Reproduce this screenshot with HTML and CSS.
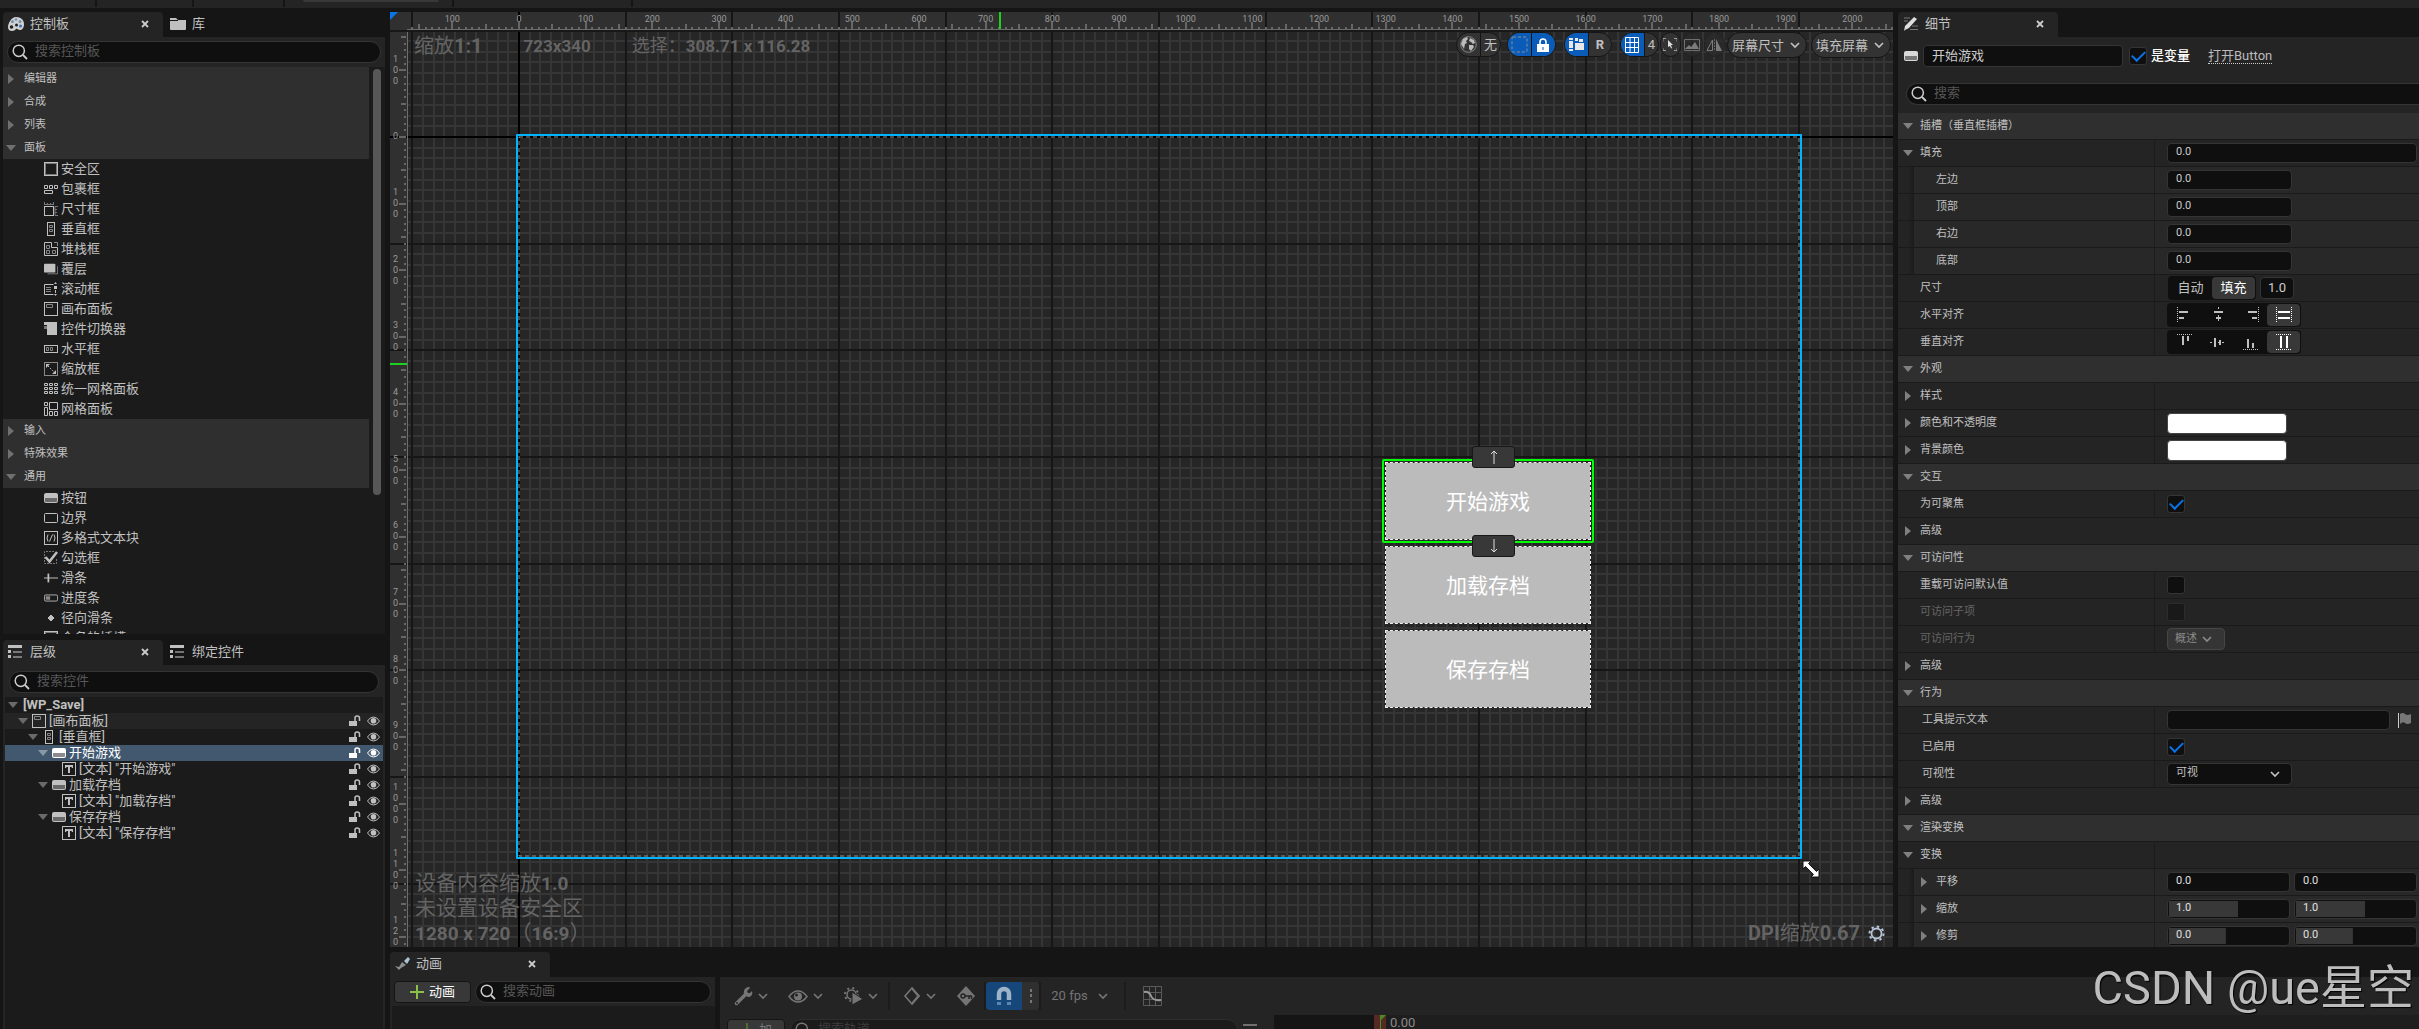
FILE: index.html
```html
<!DOCTYPE html>
<html lang="zh-CN">
<head>
<meta charset="utf-8">
<title>WP_Save</title>
<link rel="stylesheet" href="styles.css">
</head>
<body>
<svg class="defs" aria-hidden="true">
  <symbol id="right" viewBox="0 0 10 10"><path d="M2 0l6 5-6 5z" fill="currentColor"/></symbol>
  <symbol id="down" viewBox="0 0 10 10"><path d="M0 2h10l-5 6z" fill="currentColor"/></symbol>
  <symbol id="x" viewBox="0 0 8 8"><path d="M1 1l6 6M7 1l-6 6" stroke="currentColor" stroke-width="1.8"/></symbol>
  <symbol id="chev" viewBox="0 0 10 8"><path d="M1 2l4 4 4-4" fill="none" stroke="currentColor" stroke-width="1.7"/></symbol>
  <symbol id="search" viewBox="0 0 16 16"><circle cx="6.8" cy="6.8" r="5.6" fill="none" stroke="currentColor" stroke-width="1.5"/><path d="M11 11l4 4" stroke="currentColor" stroke-width="1.8"/></symbol>
  <symbol id="palette" viewBox="0 0 16 14"><path d="M8 0C13 0 16 3 16 7s-2 6-4 6-3-2-4-1-2 2-4 2-4-1-4-4S3 0 8 0z" fill="#d0d0d0"/><circle cx="3.5" cy="10" r="1.8" fill="#222"/><g fill="#6d93b5"><circle cx="4.500" cy="4.500" r="1.500"/><circle cx="8" cy="2.500" r="1.300"/><circle cx="12" cy="4.500" r="1.500"/></g><circle cx="8.500" cy="8" r="1.500" fill="#222"/><circle cx="12.500" cy="9" r="1.600" fill="#3d78c8"/></symbol>
  <symbol id="folder" viewBox="0 0 16 12"><path d="M0 0h6l2 2h8v9q0 1-1 1H1q-1 0-1-1z" fill="currentColor"/><path d="M0 2.500h8" stroke="#151515"/></symbol>
  <symbol id="list" viewBox="0 0 14 13"><path d="M0 0h14v3H0zM0 5h3v3H0zM0 10h3v3H0z" fill="currentColor"/><path d="M5 6h9v2H5zM5 11h9v2H5z" fill="currentColor" opacity=".55"/></symbol>
  <symbol id="pencil" viewBox="0 0 15 14"><path d="M1 1h6M1 4h4M9 9h6M7 12.500h8" stroke="#777" stroke-width="1"/><path d="M11 0l3 2-8 9-4 2-1 1 1-5z" fill="#ddd"/></symbol>
  <symbol id="i-safe" viewBox="0 0 14 14"><rect x=".5" y=".5" width="13" height="13" fill="none" stroke="currentColor"/><rect x="1.500" y="1.500" width="11" height="11" fill="none" stroke="#777"/></symbol>
  <symbol id="i-wrap" viewBox="0 0 14 14"><path d="M.5 3.500h3v3h-3zM5.500 3.500h3v3h-3zM10.500 3.500h3v3h-3zM.5 8.500h8v3h-8z" fill="none" stroke="currentColor"/></symbol>
  <symbol id="i-size" viewBox="0 0 14 14"><rect x=".5" y="4.500" width="9" height="9" fill="none" stroke="currentColor"/><path d="M0 2.500h10M.5 0v2M3.500 1v1M6.500 1v1M9.500 0v2M14 4.500h-3v9h3M11 7.500h2M11 10.500h2" fill="none" stroke="#777"/></symbol>
  <symbol id="i-vbox" viewBox="0 0 14 14"><rect x="3.500" y=".5" width="7" height="13" fill="none" stroke="currentColor"/><path d="M5.500 3.500h3v2h-3zM5.500 7.500h3v2h-3z" fill="none" stroke="#888"/></symbol>
  <symbol id="i-stack" viewBox="0 0 14 14"><path d="M.5 .5h7v5h6v8H.5z" fill="none" stroke="currentColor"/><path d="M2.500 3.500h3v3h-3zM2.500 8.500h3v3h-3zM8.500 8.500h3v3h-3zM10 .5h3.500V4" fill="none" stroke="#888"/></symbol>
  <symbol id="i-over" viewBox="0 0 16 14"><path d="M15.500 4v8.500H4" fill="none" stroke="#888"/><rect width="13" height="10" rx="1" y="1" fill="currentColor"/></symbol>
  <symbol id="i-scroll" viewBox="0 0 14 14"><path d="M9.500 2.500h-9v10h9" fill="none" stroke="currentColor"/><path d="M2 5.500h5M2 7.500h5M2 9.500h5" stroke="#888"/><path d="M10 4h3v3h-3zM10 2l1.500-2L13 2zM10 12l1.500 2 1.500-2zM11 8h1v3h-1z" fill="currentColor"/></symbol>
  <symbol id="i-canvas" viewBox="0 0 14 14"><rect x=".5" y=".5" width="13" height="13" fill="none" stroke="currentColor"/><path d="M2.500 2.500h6v3h-6z" fill="none" stroke="#888"/></symbol>
  <symbol id="i-switch" viewBox="0 0 14 14"><path d="M0 0h13v13H3V3H0z" fill="currentColor"/><path d="M0 4h3v3H0z" fill="#777"/></symbol>
  <symbol id="i-hbox" viewBox="0 0 14 14"><rect x=".5" y="3.500" width="13" height="7" fill="none" stroke="currentColor"/><path d="M2.500 5.500h2v3h-2zM6.500 5.500h2v3h-2z" fill="none" stroke="#888"/></symbol>
  <symbol id="i-scale" viewBox="0 0 14 14"><rect x=".5" y=".5" width="13" height="13" fill="none" stroke="#888"/><path d="M2 2h4L2 6zM12 12H8l4-4z" fill="currentColor"/><path d="M4 4l6 6" stroke="currentColor" stroke-dasharray="1.500"/></symbol>
  <symbol id="i-ugrid" viewBox="0 0 14 14"><path d="M.5 1.500h3v2h-3zM5.500 1.500h3v2h-3zM10.500 1.500h3v2h-3zM.5 5.500h3v2h-3zM5.500 5.500h3v2h-3zM10.500 5.500h3v2h-3zM.5 9.500h3v2h-3zM5.500 9.500h3v2h-3zM10.500 9.500h3v2h-3z" fill="none" stroke="currentColor"/></symbol>
  <symbol id="i-grid" viewBox="0 0 14 14"><path d="M.5 .5h3v3h-3zM5.500 .5h8v7h-8zM.5 5.500h3v8h-3zM5.500 9.500h3v4h-3zM10.500 9.500h3v4h-3z" fill="none" stroke="currentColor"/></symbol>
  <symbol id="i-btn" viewBox="0 0 14 14"><rect y="2" width="14" height="10" rx="2" fill="currentColor"/><path d="M1 7h12v3q0 1-1 1H2q-1 0-1-1z" fill="#000" opacity=".45"/></symbol>
  <symbol id="i-border" viewBox="0 0 14 14"><rect x=".5" y="2.500" width="13" height="9" rx="1" fill="none" stroke="currentColor"/></symbol>
  <symbol id="i-rich" viewBox="0 0 14 14"><rect x=".5" y=".5" width="13" height="13" fill="none" stroke="currentColor"/><path d="M4 3.500Q2 7 4 10.500M10 3.500q2 3.500 0 7M8.500 3.500l-3 7" fill="none" stroke="currentColor"/></symbol>
  <symbol id="i-check" viewBox="0 0 14 14"><path d="M10 .5H.5v12h12V7" fill="none" stroke="#777" stroke-dasharray="2 1"/><path d="M1.500 6l4 4.500L13 1" fill="none" stroke="currentColor" stroke-width="2.500"/></symbol>
  <symbol id="i-slider" viewBox="0 0 16 14"><path d="M0 6h16v2H0z" fill="#777"/><path d="M4 2h2v10H4z" fill="currentColor"/></symbol>
  <symbol id="i-prog" viewBox="0 0 16 14"><rect x=".5" y="3.500" width="15" height="7" rx="1.500" fill="none" stroke="currentColor"/><path d="M2 5h5v4H2z" fill="#888"/></symbol>
  <symbol id="i-radial" viewBox="0 0 14 14"><path d="M7 4l3 3-3 3-3-3z" fill="currentColor" stroke="currentColor"/></symbol>
  <symbol id="i-text" viewBox="0 0 14 14"><rect x=".5" y=".5" width="13" height="13" fill="none" stroke="currentColor"/><path d="M3 3h8v3h-1l-.5-1H8v6H6V5H4.500L4 6H3z" fill="currentColor"/></symbol>
  <symbol id="lock" viewBox="0 0 13 12"><path d="M1 6h8v5H1z" fill="currentColor"/><path d="M7 6V3q0-2 2.200-2T11.500 3v3" fill="none" stroke="currentColor" stroke-width="1.500"/></symbol>
  <symbol id="eye" viewBox="0 0 13 10"><path d="M.5 5Q3 1 6.500 1T12.500 5Q10 9 6.500 9T.5 5z" fill="none" stroke="currentColor"/><circle cx="6.500" cy="4.800" r="2.800" fill="currentColor"/></symbol>
  <symbol id="al-l" viewBox="0 0 16 16"><path d="M.5 0v16" stroke="currentColor" stroke-dasharray="1"/><path d="M2 4h9v2H2zM2 10h5v2H2z" fill="currentColor"/></symbol>
  <symbol id="al-c" viewBox="0 0 16 16"><path d="M8.500 0v16" stroke="currentColor" stroke-dasharray="2"/><path d="M4 4h9v2H4zM6 10h5v2H6z" fill="currentColor"/></symbol>
  <symbol id="al-r" viewBox="0 0 16 16"><path d="M15.500 0v16" stroke="currentColor" stroke-dasharray="1"/><path d="M5 4h9v2H5zM9 10h5v2H9z" fill="currentColor"/></symbol>
  <symbol id="al-f" viewBox="0 0 16 16"><path d="M.5 0v16M15.500 0v16" stroke="currentColor" stroke-dasharray="1"/><path d="M2 4h12v2H2zM2 10h12v2H2z" fill="currentColor"/></symbol>
</svg>

<div class="app">
  <div class="topbar"><i class="t1"></i><i class="t2"></i><i class="t3"></i><i class="t4"></i><i class="t5"></i><i class="t6"></i></div>
  <div class="work">
    <aside class="left">
      <section class="dock palette">
        <nav class="tabs">
          <div class="tab on"><svg width="16" height="14"><use href="#palette"/></svg><span>控制板</span><button class="close" aria-label="关闭"><svg width="8" height="8"><use href="#x"/></svg></button></div>
          <div class="tab"><svg width="16" height="12"><use href="#folder"/></svg><span>库</span></div>
        </nav>
        <label class="search"><svg width="16" height="16"><use href="#search"/></svg><input placeholder="搜索控制板" aria-label="搜索控制板"></label>
        <div class="listwrap">
          <div class="list">
            <div class="cat"><svg><use href="#right"/></svg>编辑器</div>
            <div class="cat"><svg><use href="#right"/></svg>合成</div>
            <div class="cat"><svg><use href="#right"/></svg>列表</div>
            <div class="cat"><svg><use href="#down"/></svg>面板</div>
            <ul>
              <li><svg><use href="#i-safe"/></svg>安全区</li>
              <li><svg><use href="#i-wrap"/></svg>包裹框</li>
              <li><svg><use href="#i-size"/></svg>尺寸框</li>
              <li><svg><use href="#i-vbox"/></svg>垂直框</li>
              <li><svg><use href="#i-stack"/></svg>堆栈框</li>
              <li><svg><use href="#i-over"/></svg>覆层</li>
              <li><svg><use href="#i-scroll"/></svg>滚动框</li>
              <li><svg><use href="#i-canvas"/></svg>画布面板</li>
              <li><svg><use href="#i-switch"/></svg>控件切换器</li>
              <li><svg><use href="#i-hbox"/></svg>水平框</li>
              <li><svg><use href="#i-scale"/></svg>缩放框</li>
              <li><svg><use href="#i-ugrid"/></svg>统一网格面板</li>
              <li><svg><use href="#i-grid"/></svg>网格面板</li>
            </ul>
            <div class="cat"><svg><use href="#right"/></svg>输入</div>
            <div class="cat"><svg><use href="#right"/></svg>特殊效果</div>
            <div class="cat"><svg><use href="#down"/></svg>通用</div>
            <ul>
              <li><svg><use href="#i-btn"/></svg>按钮</li>
              <li><svg><use href="#i-border"/></svg>边界</li>
              <li><svg><use href="#i-rich"/></svg>多格式文本块</li>
              <li><svg><use href="#i-check"/></svg>勾选框</li>
              <li><svg><use href="#i-slider"/></svg>滑条</li>
              <li><svg><use href="#i-prog"/></svg>进度条</li>
              <li><svg><use href="#i-radial"/></svg>径向滑条</li>
              <li><svg><use href="#i-safe"/></svg>命名的插槽</li>
            </ul>
          </div>
          <div class="scroll"><i></i></div>
        </div>
      </section>
      <section class="dock hier">
        <nav class="tabs">
          <div class="tab on"><svg width="14" height="13"><use href="#list"/></svg><span>层级</span><button class="close" aria-label="关闭"><svg width="8" height="8"><use href="#x"/></svg></button></div>
          <div class="tab"><svg width="14" height="13"><use href="#list"/></svg><span>绑定控件</span></div>
        </nav>
        <label class="search"><svg width="16" height="16"><use href="#search"/></svg><input placeholder="搜索控件" aria-label="搜索控件"></label>
        <div class="tree">
          <div class="node d0"><svg class="ar"><use href="#down"/></svg><b>[WP_Save]</b></div>
          <div class="node d1 hov"><svg class="ar"><use href="#down"/></svg><svg class="ic"><use href="#i-canvas"/></svg><span>[画布面板]</span><svg class="lk"><use href="#lock"/></svg><svg class="ey"><use href="#eye"/></svg></div>
          <div class="node d2"><svg class="ar"><use href="#down"/></svg><svg class="ic"><use href="#i-vbox"/></svg><span>[垂直框]</span><svg class="lk"><use href="#lock"/></svg><svg class="ey"><use href="#eye"/></svg></div>
          <div class="node d3 sel"><svg class="ar"><use href="#down"/></svg><svg class="ic"><use href="#i-btn"/></svg><span>开始游戏</span><svg class="lk"><use href="#lock"/></svg><svg class="ey"><use href="#eye"/></svg></div>
          <div class="node d4"><svg class="ar"></svg><svg class="ic"><use href="#i-text"/></svg><span>[文本] "开始游戏"</span><svg class="lk"><use href="#lock"/></svg><svg class="ey"><use href="#eye"/></svg></div>
          <div class="node d3"><svg class="ar"><use href="#down"/></svg><svg class="ic"><use href="#i-btn"/></svg><span>加载存档</span><svg class="lk"><use href="#lock"/></svg><svg class="ey"><use href="#eye"/></svg></div>
          <div class="node d4"><svg class="ar"></svg><svg class="ic"><use href="#i-text"/></svg><span>[文本] "加载存档"</span><svg class="lk"><use href="#lock"/></svg><svg class="ey"><use href="#eye"/></svg></div>
          <div class="node d3"><svg class="ar"><use href="#down"/></svg><svg class="ic"><use href="#i-btn"/></svg><span>保存存档</span><svg class="lk"><use href="#lock"/></svg><svg class="ey"><use href="#eye"/></svg></div>
          <div class="node d4"><svg class="ar"></svg><svg class="ic"><use href="#i-text"/></svg><span>[文本] "保存存档"</span><svg class="lk"><use href="#lock"/></svg><svg class="ey"><use href="#eye"/></svg></div>
        </div>
      </section>
    </aside>

    <main class="view">
      <svg class="grid" width="100%" height="100%" aria-hidden="true">
        <defs>
          <pattern id="minor" x="128" y="124" width="320" height="320" patternUnits="userSpaceOnUse">
            <path d="M12 0v320M22 0v320M33 0v320M44 0v320M54 0v320M65 0v320M76 0v320M86 0v320M97 0v320M118 0v320M129 0v320M140 0v320M150 0v320M161 0v320M172 0v320M182 0v320M193 0v320M204 0v320M225 0v320M236 0v320M246 0v320M257 0v320M268 0v320M278 0v320M289 0v320M300 0v320M310 0v320M0 12h320M0 22h320M0 33h320M0 44h320M0 54h320M0 65h320M0 76h320M0 86h320M0 97h320M0 118h320M0 129h320M0 140h320M0 150h320M0 161h320M0 172h320M0 182h320M0 193h320M0 204h320M0 225h320M0 236h320M0 246h320M0 257h320M0 268h320M0 278h320M0 289h320M0 300h320M0 310h320" stroke="#353535" stroke-width="2"/>
          </pattern>
          <pattern id="mv" x="128" y="0" width="320" height="320" patternUnits="userSpaceOnUse"><path d="M1 0v320M108 0v320M214 0v320" stroke="#161616" stroke-width="2"/></pattern>
          <pattern id="mh" x="0" y="124" width="320" height="320" patternUnits="userSpaceOnUse"><path d="M0 1h320M0 108h320M0 214h320" stroke="#161616" stroke-width="2"/></pattern>
          <pattern id="tx" x="128" y="0" width="200" height="18" patternUnits="userSpaceOnUse"><path d="M8 15v2M14 15v2M21 15v2M28 15v2M34 12v5M41 15v2M48 15v2M54 15v2M61 15v2M74 15v2M81 15v2M88 15v2M94 15v2M101 12v5M108 15v2M114 15v2M121 15v2M128 15v2M141 15v2M148 15v2M154 15v2M161 15v2M168 12v5M174 15v2M181 15v2M188 15v2M194 15v2M1 10v7M68 10v7M134 10v7" stroke="#666" stroke-width="2"/></pattern>
          <pattern id="ty" x="0" y="124" width="18" height="200" patternUnits="userSpaceOnUse"><path d="M14 8h2M14 14h2M14 21h2M14 28h2M11 34h5M14 41h2M14 48h2M14 54h2M14 61h2M14 74h2M14 81h2M14 88h2M14 94h2M11 101h5M14 108h2M14 114h2M14 121h2M14 128h2M14 141h2M14 148h2M14 154h2M14 161h2M11 168h5M14 174h2M14 181h2M14 188h2M14 194h2M9 1h7M9 68h7M9 134h7" stroke="#666" stroke-width="2"/></pattern>
        </defs>
        <rect width="100%" height="100%" fill="#262626"/>
        <rect width="100%" height="100%" fill="url(#minor)"/>
        <rect width="100%" height="18" fill="#303030"/>
        <rect width="18" height="100%" fill="#303030"/>
        <rect x="18" width="100%" height="100%" fill="url(#mv)"/>
        <rect y="18" width="100%" height="100%" fill="url(#mh)"/>
        <path d="M129 0v2000M0 125h4000" stroke="#000" stroke-width="2"/>
        <rect x="18" width="100%" height="18" fill="url(#tx)"/>
        <rect y="20" width="18" height="100%" fill="url(#ty)"/>
        <path d="M0 19h4000" stroke="#181818" stroke-width="2"/>
        <path d="M17 17.500h4000M17.500 20v2000" stroke="#6c6c6c"/>
        <path d="M0 0h8l-8 8z" fill="#0a74e8"/>
        <path d="M610 0v17M0 352h17" stroke="#1fd11f" stroke-width="2"/>
      </svg>
      <div class="rx"><span>100</span><span>0</span><span>100</span><span>200</span><span>300</span><span>400</span><span>500</span><span>600</span><span>700</span><span>800</span><span>900</span><span>1000</span><span>1100</span><span>1200</span><span>1300</span><span>1400</span><span>1500</span><span>1600</span><span>1700</span><span>1800</span><span>1900</span><span>2000</span><span></span><span></span></div>
      <div class="ry"><span>100</span><span>0</span><span>100</span><span>200</span><span>300</span><span>400</span><span>500</span><span>600</span><span>700</span><span>800</span><span>900</span><span>1000</span><span>1100</span><span>1200</span><span></span><span></span><span></span><span></span><span></span><span></span><span></span><span></span><span></span><span></span></div>

      <div class="info"><span class="big">缩放<b>1:1</b></span><b>723x340</b><span>选择：<b>308.71 x 116.28</b></span></div>

      <div class="vbar">
        <div class="pill world"><button><svg width="17" height="17" viewBox="0 0 17 17"><circle cx="8.500" cy="8.500" r="7.800" fill="#333" stroke="#888"/><path d="M3 3l4-2 1 2-2 2 1 2-2 1-1 5-3-5zM10 2l4 2 1 3-2 1-2-2-2-1zM9 9l4 0 1 2-3 4-2-2z" fill="#bbb"/></svg></button><button class="n20">无</button></div>
        <div class="pill"><button class="blue"><svg width="17" height="17" viewBox="0 0 17 17"><rect x="1" y="1" width="15" height="15" rx="1" fill="none" stroke="#8a8f95" stroke-dasharray="3 2"/></svg></button><button class="blue"><svg width="12" height="14" viewBox="0 0 12 14"><path d="M0 6h12v8H0z" fill="#fff"/><path d="M3 6V4a3 3 0 016 0v2" fill="none" stroke="#fff" stroke-width="1.600"/><path d="M5.500 9h1v3h-1z" fill="#0b5cb8"/></svg></button></div>
        <div class="pill"><button class="blue"><svg width="15" height="13" viewBox="0 0 15 13"><path d="M0 0h4v2H0zM0 3h4v7H0zM0 11h4v2H0zM6 0h3v3H6zM10 1h4v3h-4zM6 5h9v7H6z" fill="#e8e8e8"/></svg></button><button><b>R</b></button></div>
        <div class="set">
          <div class="pill"><button class="blue"><svg width="14" height="16" viewBox="0 0 14 16"><path d="M.5 .5h13v15H.5zM5 0v16M9.500 0v16M0 5.500h14M0 10.500h14" fill="none" stroke="#fff"/></svg></button><button class="n14">4</button></div>
          <div class="pill"><button class="n21"><svg width="14" height="13" viewBox="0 0 14 13"><path d="M0 3.500V.5h3M11 .5h3v3M14 10v2.500h-3M3 12.500H0V10" fill="none" stroke="#999"/><path d="M5 2l5 5H8l1 3-1 .5L7 8 5 9z" fill="#ddd"/></svg></button></div>
          <div class="pill dim"><button class="n21"><svg width="16" height="12" viewBox="0 0 16 12"><path d="M.5 .5h15v11H.5z" fill="none" stroke="#888"/><path d="M1 10l4-4 2 2 4-5 4 7z" fill="#999"/></svg></button></div>
          <div class="pill dim"><button class="n21"><svg width="17" height="12" viewBox="0 0 17 12"><path d="M6.500 1v10.500H1z" fill="none" stroke="#999"/><path d="M10 0v12h6z" fill="#999"/><path d="M8.500 0v12" stroke="#777" stroke-dasharray="2 1"/></svg></button></div>
        </div>
        <div class="set drop"><button class="dd">屏幕尺寸<svg width="10" height="8"><use href="#chev"/></svg></button><button class="dd">填充屏幕<svg width="10" height="8"><use href="#chev"/></svg></button></div>
      </div>

      <div class="root"><svg width="100%" height="100%"><rect class="dash" x="1" y="1"/></svg></div>
      <div class="vb">
        <button class="gb">开始游戏</button><button class="gb">加载存档</button><button class="gb">保存存档</button>
        <div class="selbox"></div>
        <button class="mv up" aria-label="上移"><svg width="8" height="14" viewBox="0 0 8 14"><path d="M4 1v13M1 4l3-3 3 3" fill="none" stroke="#ddd"/></svg></button>
        <button class="mv dn" aria-label="下移"><svg width="8" height="14" viewBox="0 0 8 14"><path d="M4 0v13M1 10l3 3 3-3" fill="none" stroke="#ddd"/></svg></button>
      </div>
      <svg class="resize" width="18" height="18" viewBox="0 0 18 18"><path d="M1 1h8L6.500 3.500l8 8L17 9v8H9l2.500-2.500-8-8L1 9z" fill="#fff" stroke="#111"/></svg>

      <div class="status"><span>设备内容缩放<b>1.0</b></span><span>未设置设备安全区</span><span><b>1280 x 720</b>（<b>16:9</b>）</span></div>
      <div class="dpi"><span><b>DPI</b>缩放<b>0.67</b></span><svg width="17" height="17" viewBox="0 0 17 17"><circle cx="8.500" cy="8.500" r="5" fill="none" stroke="#b9c6d8" stroke-width="1.800"/><circle cx="8.500" cy="8.500" r="7" fill="none" stroke="#b9c6d8" stroke-width="2" stroke-dasharray="2.500 3"/></svg></div>
    </main>

    <aside class="dock details">
      <nav class="tabs"><div class="tab on"><svg width="15" height="14"><use href="#pencil"/></svg><span>细节</span><button class="close" aria-label="关闭"><svg width="8" height="8"><use href="#x"/></svg></button></div></nav>
      <div class="name"><svg width="14" height="14"><use href="#i-btn"/></svg><input class="in" value="开始游戏" aria-label="名称"><label><input type="checkbox" checked>是变量</label><a href="#">打开Button</a></div>
      <label class="search"><svg width="16" height="16"><use href="#search"/></svg><input placeholder="搜索" aria-label="搜索"></label>
      <div class="rows">
        <div class="hd"><svg class="ar"><use href="#down"/></svg>插槽（垂直框插槽）</div>
        <div class="row"><span class="lb"><svg class="ar"><use href="#down"/></svg>填充</span><span class="v"><input class="in wide" value="0.0" aria-label="填充"></span></div>
        <div class="row sub"><label class="lb" for="pl">左边</label><span class="v"><input class="in" id="pl" value="0.0"></span></div>
        <div class="row sub"><label class="lb" for="pt">顶部</label><span class="v"><input class="in" id="pt" value="0.0"></span></div>
        <div class="row sub"><label class="lb" for="pr">右边</label><span class="v"><input class="in" id="pr" value="0.0"></span></div>
        <div class="row sub"><label class="lb" for="pb">底部</label><span class="v"><input class="in" id="pb" value="0.0"></span></div>
        <div class="row"><span class="lb">尺寸</span><span class="v"><span class="seg txt"><button>自动</button><button class="on">填充</button></span><input class="in mini" value="1.0" aria-label="尺寸"></span></div>
        <div class="row"><span class="lb">水平对齐</span><span class="v"><span class="seg"><button aria-label="左"><svg><use href="#al-l"/></svg></button><button aria-label="中"><svg><use href="#al-c"/></svg></button><button aria-label="右"><svg><use href="#al-r"/></svg></button><button class="on" aria-label="填充"><svg><use href="#al-f"/></svg></button></span></span></div>
        <div class="row"><span class="lb">垂直对齐</span><span class="v"><span class="seg rot"><button aria-label="上"><svg viewBox="0 0 16 16"><path d="M0 .5h16" stroke="currentColor" stroke-dasharray="1"/><path d="M5 2h2v9H5zM10 2h2v5h-2z" fill="currentColor"/></svg></button><button aria-label="中"><svg viewBox="0 0 16 16"><path d="M0 8.500h16" stroke="currentColor" stroke-dasharray="2"/><path d="M4 4h2v9H4zM9 6h2v5H9z" fill="currentColor"/></svg></button><button aria-label="下"><svg viewBox="0 0 16 16"><path d="M0 15.500h16" stroke="currentColor" stroke-dasharray="1"/><path d="M4 5h2v9H4zM9 9h2v5H9z" fill="currentColor"/></svg></button><button class="on" aria-label="填充"><svg viewBox="0 0 16 16"><path d="M0 .5h16M0 15.500h16" stroke="currentColor" stroke-dasharray="1"/><path d="M4 2h2v12H4zM10 2h2v12h-2z" fill="currentColor"/></svg></button></span></span></div>
        <div class="hd"><svg class="ar"><use href="#down"/></svg>外观</div>
        <div class="row"><span class="lb"><svg class="ar"><use href="#right"/></svg>样式</span><span class="v"></span></div>
        <div class="row"><span class="lb"><svg class="ar"><use href="#right"/></svg>颜色和不透明度</span><span class="v"><button class="swatch" aria-label="颜色和不透明度"></button></span></div>
        <div class="row"><span class="lb"><svg class="ar"><use href="#right"/></svg>背景颜色</span><span class="v"><button class="swatch" aria-label="背景颜色"></button></span></div>
        <div class="hd"><svg class="ar"><use href="#down"/></svg>交互</div>
        <div class="row"><label class="lb" for="foc">为可聚焦</label><span class="v"><input type="checkbox" id="foc" checked></span></div>
        <div class="row full"><span class="lb"><svg class="ar"><use href="#right"/></svg>高级</span></div>
        <div class="hd"><svg class="ar"><use href="#down"/></svg>可访问性</div>
        <div class="row"><label class="lb" for="acc">重载可访问默认值</label><span class="v"><input type="checkbox" id="acc"></span></div>
        <div class="row off"><label class="lb" for="ach">可访问子项</label><span class="v"><input type="checkbox" id="ach" disabled></span></div>
        <div class="row off"><span class="lb">可访问行为</span><span class="v"><button class="sum" disabled>概述<svg width="10" height="8"><use href="#chev"/></svg></button></span></div>
        <div class="row full"><span class="lb"><svg class="ar"><use href="#right"/></svg>高级</span></div>
        <div class="hd"><svg class="ar"><use href="#down"/></svg>行为</div>
        <div class="row in2"><label class="lb" for="tip">工具提示文本</label><span class="v"><input class="in tip" id="tip"><svg class="flag" width="13" height="15" viewBox="0 0 13 15"><path d="M.5 0v15" stroke="#ccc"/><path d="M2 1q3-2 5 0t6 0v9q-4 2-6 0t-5 1z" fill="#777"/></svg></span></div>
        <div class="row in2"><label class="lb" for="ena">已启用</label><span class="v"><input type="checkbox" id="ena" checked></span></div>
        <div class="row in2"><label class="lb" for="vis">可视性</label><span class="v"><span class="selw"><select id="vis"><option>可视</option></select><svg width="10" height="8"><use href="#chev"/></svg></span></span></div>
        <div class="row full"><span class="lb"><svg class="ar"><use href="#right"/></svg>高级</span></div>
        <div class="hd"><svg class="ar"><use href="#down"/></svg>渲染变换</div>
        <div class="row"><span class="lb"><svg class="ar"><use href="#down"/></svg>变换</span><span class="v"></span></div>
        <div class="row sub br"><span class="lb"><svg class="ar"><use href="#right"/></svg>平移</span><span class="v two"><input class="in" value="0.0" aria-label="平移 X"><input class="in" value="0.0" aria-label="平移 Y"></span></div>
        <div class="row sub br"><span class="lb"><svg class="ar"><use href="#right"/></svg>缩放</span><span class="v two"><input class="in f57" value="1.0" aria-label="缩放 X"><input class="in f57" value="1.0" aria-label="缩放 Y"></span></div>
        <div class="row sub br"><span class="lb"><svg class="ar"><use href="#right"/></svg>修剪</span><span class="v two"><input class="in f47" value="0.0" aria-label="修剪 X"><input class="in f47" value="0.0" aria-label="修剪 Y"></span></div>
      </div>
    </aside>

    <section class="dock anim">
      <nav class="tabs"><div class="tab on"><svg width="15" height="13" viewBox="0 0 15 13"><path d="M9 4l4-4 2 2-3 5z" fill="#a9c4d6"/><path d="M7 5l4 3-5 3-2 2-4-4 4 1z" fill="#8a8f8f"/></svg><span>动画</span><button class="close" aria-label="关闭"><svg width="8" height="8"><use href="#x"/></svg></button></div></nav>
      <div class="abody">
        <div class="alist">
          <div class="atools"><button class="add"><svg width="14" height="14" viewBox="0 0 14 14"><path d="M7 0v14M0 7h14" stroke="#8bc34a" stroke-width="2"/></svg>动画</button><label class="search"><svg width="16" height="16"><use href="#search"/></svg><input placeholder="搜索动画" aria-label="搜索动画"></label></div>
          <div class="dark"></div>
        </div>
        <div class="seq">
          <div class="tools">
            <button class="w48"><svg width="19" height="19" viewBox="0 0 19 19"><path d="M2.500 16.500l9-9" stroke="currentColor" stroke-width="3.500" stroke-linecap="round"/><path d="M16 1l-3 3 1 2 2 0 2-2q1 3-1 5t-5 0l-2-2q-1-4 2-6t4 0z" fill="currentColor"/><circle cx="3" cy="16" r="1" fill="#242424"/></svg><svg width="10" height="8"><use href="#chev"/></svg></button>
            <button class="w48"><svg width="20" height="13" viewBox="0 0 20 13"><path d="M1 6.500Q5 1 10 1t9 5.500Q15 12 10 12T1 6.500z" fill="none" stroke="currentColor" stroke-width="1.500"/><circle cx="10" cy="6.500" r="4" fill="currentColor"/><circle cx="8.500" cy="5" r="1.500" fill="#242424"/></svg><svg width="10" height="8"><use href="#chev"/></svg></button>
            <button class="w48"><svg width="19" height="18" viewBox="0 0 19 18"><circle cx="7.500" cy="7.500" r="4.500" fill="none" stroke="currentColor" stroke-width="1.500"/><circle cx="7.500" cy="7.500" r="6.500" fill="none" stroke="currentColor" stroke-width="2" stroke-dasharray="2 3.100"/><path d="M8 5l11 7-11 6z" fill="currentColor" stroke="#242424"/></svg><svg width="10" height="8"><use href="#chev"/></svg></button>
            <i></i>
            <button class="w50"><svg width="18" height="20" viewBox="0 0 18 20"><path d="M9 2l7 8-7 8-7-8z" fill="none" stroke="currentColor" stroke-width="1.600"/><path d="M9 1l8 9-8 9v-3l5-6-5-6z" fill="currentColor"/></svg><svg width="10" height="8"><use href="#chev"/></svg></button>
            <button class="w30"><svg width="18" height="20" viewBox="0 0 18 20"><path d="M9 0l9 10-9 10L0 10z" fill="currentColor"/><circle cx="6" cy="10" r="2" fill="none" stroke="#242424" stroke-width="1.500"/><path d="M8 10h7M12 10v3M14.500 10v3" stroke="#242424" stroke-width="1.500"/></svg></button>
            <i></i>
            <span class="snap"><button class="mag"><svg width="16" height="20" viewBox="0 0 16 20"><path d="M3 14V8a5 5 0 0110 0v6" fill="none" stroke="#9fb3c8" stroke-width="4.500"/><path d="M1 16h4v3H1zM11 16h4v3h-4z" fill="#5c86b0"/></svg></button><button class="dots"><svg width="4" height="14" viewBox="0 0 4 14"><path d="M1 0h2v3H1zM1 5h2v3H1zM1 11h2v3H1z" fill="currentColor"/></svg></button></span>
            <i></i>
            <button class="fps">20 fps<svg width="10" height="8"><use href="#chev"/></svg></button>
            <i></i>
            <button class="curve"><svg width="19" height="20" viewBox="0 0 19 20"><path d="M.5 .5h18v19H.5zM6.500 0v20M12.500 0v20M0 6.500h19M0 13.500h19" fill="none" stroke="#5a5a5a"/><path d="M1 6q5-1 7 4t10 4" fill="none" stroke="#999" stroke-width="2"/></svg></button>
          </div>
          <div class="tracks">
            <div class="tl"><button class="add"><svg width="14" height="14" viewBox="0 0 14 14"><path d="M7 0v14M0 7h14" stroke="#4f6d33" stroke-width="2"/></svg>加</button><label class="search"><svg width="16" height="16"><use href="#search"/></svg><input placeholder="搜索轨道" aria-label="搜索轨道"></label><i></i></div>
            <div class="head"></div>
            <div class="time"><svg width="13" height="14" viewBox="0 0 13 14"><path d="M0 0h12v14H0z" fill="#552a24"/><path d="M6 0h6L7 5v9H6z" fill="#4c8a22"/></svg>0.00</div>
          </div>
        </div>
      </div>
    </section>
  </div>
</div>
<div class="mark">CSDN @ue星空</div>
</body>
</html>
```

FILE: styles.css
```css
* { box-sizing: border-box; }
body { margin: 0; background: #151515; color: #c0c0c0; font: 13px/16px Roboto, "Noto Sans CJK SC", sans-serif; overflow: hidden; }
button, input, select { font: inherit; color: inherit; border: 0; padding: 0; margin: 0; background: none; }
ul { list-style: none; margin: 0; padding: 0; }
svg { display: block; flex: none; }
.defs { display: none; }

.app { height: 100vh; display: flex; flex-direction: column; gap: 4px; }
.topbar { height: 8px; flex: none; background: #242424; display: flex; padding-left: 95px; }
.topbar i { height: 7px; border-left: 2px solid #151515; }
.topbar .t1 { width: 97px; }
.topbar .t2 { width: 91px; }
.topbar .t3 { width: 20px; }
.topbar .t4 { width: 136px; height: 2px; background: #383838; border: 0; border-radius: 0 0 3px 3px; }
.topbar .t5 { width: 179px; margin-left: 13px; }
.topbar .t6 { width: 10px; }
.work { flex: 1; min-height: 0; display: grid; grid-template: minmax(0, 1fr) 77px / 382px minmax(0, 1fr) 521px; gap: 5px; padding-left: 3px; }
.left { grid-row: 1 / 3; display: flex; flex-direction: column; gap: 6px; min-height: 0; }
.dock { background: #242424; display: flex; flex-direction: column; min-height: 0; overflow: hidden; }
.palette { flex: 622 1 0; }
.hier { flex: 389 1 0; }

.tabs { height: 25px; flex: none; background: #151515; display: flex; }
.tab { display: flex; align-items: center; gap: 6px; padding: 0 7px 2px; line-height: 22px; }
.tab.on { width: 160px; background: #242424; border-radius: 4px 4px 0 0; padding: 0 14px 2px 5px; }
.close { margin-left: auto; }
.close svg { color: #ccc; }
.hier .tab { gap: 8px; }
.search { display: flex; align-items: center; gap: 7px; height: 22px; flex: none; margin: 4px; padding: 0 4px; background: #0f0f0f; border: 1px solid #343434; border-radius: 11px; }
.search input { flex: 1; min-width: 0; outline: 0; padding-bottom: 2px; }
.search input::placeholder { color: #575757; opacity: 1; }
.search svg { color: #ccc; }

.listwrap { flex: 1; min-height: 0; display: flex; background: #1b1b1b; }
.list { flex: 1; overflow: hidden; }
.cat { height: 23px; display: flex; align-items: center; gap: 8px; padding-left: 3px; background: #2f2f2f; font-size: 11px; }
.cat svg { width: 10px; height: 10px; color: #707070; }
.list li { height: 20px; display: flex; align-items: center; gap: 3px; padding: 0 0 1px 41px; }
.list li svg { width: 14px; height: 14px; }
.scroll { width: 16px; padding: 2px 4px; }
.scroll i { display: block; height: 426px; border-radius: 4px; background: #575757; }

.hier .search { margin: 6px 6px 4px; }
.tree { flex: 1; margin: 0 2px; background: #1b1b1b; }
.node { height: 16px; display: flex; align-items: center; gap: 3px; padding-right: 3px; }
.node .ar { width: 10px; height: 10px; color: #6a6a6a; }
.node b { font-weight: 700; margin-left: 2px; }
.node .ic { width: 14px; height: 14px; margin-left: 1px; }
.node .lk { width: 13px; height: 12px; margin-left: auto; }
.node .ey { width: 13px; height: 10px; margin-left: 3px; }
.d0 { padding-left: 3px; }
.d1 { padding-left: 13px; }
.d2 { padding-left: 23px; }
.d3 { padding-left: 33px; }
.d4 { padding-left: 43px; }
.hov { background: #242424; }
.sel { background: #41586f; color: #fff; }
.sel .ar { color: #8a98a5; }

.view { position: relative; overflow: hidden; background: #262626; color: #646464; }
.grid { position: absolute; inset: 0; }
.rx { position: absolute; left: 29px; top: 2px; width: 1600px; display: grid; grid-template-columns: repeat(24, 1fr); text-align: center; font-size: 9px; line-height: 11px; color: #999; }
.ry { position: absolute; left: 3px; top: 25px; height: 1600px; width: 5px; display: grid; grid-template-rows: repeat(24, 1fr); align-items: center; font-size: 9px; line-height: 11px; color: #999; word-break: break-all; }
.view b { font-weight: 700; }
.info { position: absolute; left: 24px; top: 22px; display: flex; gap: 41px; align-items: center; font-size: 18px; line-height: 24px; }
.info .big { font-size: 20px; }
.info > b, .info > span:last-child b { font-size: 17px; }
.status { position: absolute; left: 25px; bottom: 1px; display: flex; flex-direction: column; font-size: 21px; line-height: 25px; }
.status b { font-size: 19px; }
.dpi { position: absolute; right: 8px; bottom: 2px; display: flex; gap: 8px; align-items: center; font-size: 20px; line-height: 24px; }

.vbar { position: absolute; right: 2px; top: 20px; display: flex; gap: 8px; color: #c0c0c0; }
.set { display: flex; gap: 1px; }
.set.drop { gap: 4px; margin-left: -6px; }
.pill { display: flex; height: 25px; border-radius: 13px; border: 1px solid #151515; background: #333; overflow: hidden; }
.pill.world { margin-right: -2px; }
.pill button { width: 23px; display: flex; align-items: center; justify-content: center; line-height: 22px; }
.pill button + button { border-left: 1px solid #151515; }
.pill .n20 { width: 20px; }
.pill .n14 { width: 14px; }
.pill .n21 { width: 19px; }
.pill .blue { background: #0b5cb8; }
.pill .blue + .blue { width: 24px; }
.pill.dim { background: #2b2b2b; border-color: #202020; opacity: .75; }
.dd { height: 26px; border-radius: 13px; border: 1px solid #151515; background: #333; display: flex; align-items: center; gap: 6px; padding: 0 6px 0 4px; line-height: 23px; }

.root { position: absolute; left: 126px; top: 122px; width: 1286px; height: 725px; border: 2px solid #00b4ff; border-radius: 1px; }
.dash { width: calc(100% - 2px); height: calc(100% - 2px); fill: none; stroke: #909090; stroke-dasharray: 4 3; }
.vb { position: absolute; left: 995px; top: 450px; width: 206px; display: flex; flex-direction: column; gap: 6px; }
.gb { height: 78px; padding-top: 2px; background: #bbb; border: 1px dashed #eee; background-clip: padding-box; color: #fff; font-size: 21px; line-height: 30px; }
.selbox { position: absolute; left: -3px; top: -3px; width: 212px; height: 84px; border: 2px solid #0f0; border-radius: 2px; }
.mv { position: absolute; left: 87px; width: 43px; height: 22px; background: #383838; border: 1px solid #181818; border-radius: 3px; display: flex; align-items: center; justify-content: center; }
.up { top: -16px; }
.dn { top: 73px; }
.resize { position: absolute; left: 1412px; top: 848px; }

.details .search { height: 22px; margin: 16px 0 8px 8px; border-right: 0; border-radius: 11px 0 0 11px; }
.details .tab { gap: 7px; }
.name { display: flex; align-items: center; height: 22px; flex: none; margin: 8px 0 0 6px; color: #d8d8d8; }
.name .in { width: 200px; height: 22px; margin: 0 6px 0 5px; font-size: 13px; }
.name label { display: flex; gap: 4px; align-items: center; font-weight: 500; color: #fff; }
.name a { margin-left: 18px; color: #bbb; text-decoration: none; border-bottom: 1px dotted #ccc; line-height: 15px; }
.in { background: #0f0f0f; border: 1px solid #343434; border-radius: 4px; height: 20px; padding: 0 8px 3px; font-size: 11px; width: 125px; outline: 0; color: #ccc; }
input[type=checkbox] { appearance: none; width: 18px; height: 18px; background: #0f0f0f; border: 1px solid #343434; border-radius: 3px; display: grid; place-items: center; flex: none; }
input[type=checkbox]:checked::after { content: ""; width: 11px; height: 6px; border: solid #0a74e8; border-width: 0 0 2px 2px; transform: rotate(-45deg) translate(1px, -1px); }
.rows { flex: 1; overflow: hidden; font-size: 11px; }
.hd, .row { height: 27px; border-bottom: 1px solid #1a1a1a; }
.hd { background: #2f2f2f; display: flex; align-items: center; gap: 7px; padding-left: 5px; }
.ar { width: 10px; height: 10px; color: #808080; }
.row { display: grid; grid-template-columns: 256px minmax(0, 1fr); background: #242424; }
.row.full { grid-template-columns: 1fr; }
.lb { display: flex; align-items: center; gap: 7px; padding-left: 22px; }
.lb:has(.ar) { padding-left: 5px; }
.in2 .lb { padding-left: 24px; }
.sub { background: linear-gradient(90deg, #242424 10px, #1b1b1b 16px, #282828 16px); }
.sub .lb { padding-left: 38px; }
.sub .lb:has(.ar) { padding-left: 21px; }
.v { display: flex; align-items: center; gap: 4px; padding: 0 2px 0 12px; border-left: 1px solid #1c1c1c; }
.v .wide { flex: 1; }
.v .mini { width: 34px; height: 22px; font-size: 13px; padding: 0 0 2px 7px; }
.two .in { flex: 1; min-width: 0; color: #e0e0e0; }
.f57 { background: linear-gradient(#383838, #383838) 1px 1px / 57% calc(100% - 2px) no-repeat #0f0f0f; }
.f47 { background: linear-gradient(#383838, #383838) 1px 1px / 47% calc(100% - 2px) no-repeat #0f0f0f; }
.seg { display: flex; height: 24px; padding: 1px; background: #0f0f0f; border-radius: 4px; }
.seg button { width: 33px; display: flex; align-items: center; justify-content: center; border-radius: 4px; }
.seg svg { width: 16px; height: 16px; }
.seg .on { background: #383838; color: #fff; }
.seg.txt { margin-left: 1px; }
.seg.txt button { width: 43px; font-size: 13px; }
.swatch { width: 120px; height: 21px; background: #fff; border-radius: 4px; border: 1px solid #444; }
.off .lb { color: #666; }
.off input { opacity: .5; }
.sum { height: 22px; width: 58px; background: #353535; border: 1px solid #464646; border-radius: 4px; display: flex; align-items: center; gap: 5px; padding: 0 7px 1px; color: #8a8a8a; }
.v .tip { flex: 1; }
.flag { margin: 0 6px 0 4px; }
.selw { display: grid; align-items: center; width: 125px; height: 22px; }
.selw > * { grid-area: 1 / 1; }
.selw select { appearance: none; width: 100%; height: 22px; background: #0f0f0f; border: 1px solid #343434; border-radius: 4px; padding: 0 8px 2px; }
.selw svg { justify-self: end; margin-right: 12px; pointer-events: none; }

.anim { grid-column: 2 / 4; }
.abody { flex: 1; min-height: 0; display: flex; }
.alist { width: 325px; flex: none; display: flex; flex-direction: column; }
.atools { display: flex; gap: 4px; padding: 4px 4px 3px; }
.atools .search { flex: 1; margin: 0; }
.add { width: 77px; height: 22px; flex: none; display: flex; align-items: center; justify-content: center; gap: 5px; background: #383838; border: 1px solid #151515; border-radius: 4px; color: #fff; }
.dark { flex: 1; margin-left: 2px; background: #1b1b1b; }
.seq { flex: 1; min-width: 0; border-left: 5px solid #151515; display: flex; flex-direction: column; }
.tools { height: 38px; flex: none; display: flex; align-items: center; gap: 4px; padding-left: 5px; color: #757575; }
.tools button { display: flex; align-items: center; justify-content: center; gap: 5px; height: 28px; }
.tools > i { width: 2px; height: 28px; margin: 0 -2px; background: #1c1c1c; }
.w48 { width: 51px; }
.w50 { width: 54px; }
.w30 { width: 32px; }
.snap { display: flex; background: #2f2f2f; border-radius: 4px; overflow: hidden; margin: 0 -2px; }
.mag { width: 36px; background: #15477a; }
.dots { width: 17px; }
.tools .fps { width: 73px; gap: 10px; margin-right: 6px; }
.curve { width: 32px; margin-left: 8px; }
.tracks { flex: 1; min-height: 0; display: flex; overflow: hidden; }
.tl { width: 554px; display: flex; gap: 5px; padding: 4px 17px 0 7px; align-items: flex-start; }
.tl .add { width: 58px; color: #777; }
.tl .search { flex: 1; margin: 0; background: #1b1b1b; border-color: #2e2e2e; }
.tl .search svg { color: #777; }
.tl .search input::placeholder { color: #3c3c3c; }
.tl i { width: 14px; height: 2px; background: #707070; margin: 5px 0 0; }
.head { width: 100px; background: #151515; }
.time { flex: 1; display: flex; gap: 3px; background: #1e1e1e; line-height: 15px; color: #8a8a8a; }

.mark { position: fixed; right: 5px; bottom: 11px; color: #bdbdbd; font-size: 47px; line-height: 60px; text-shadow: 1px 1px 1px #000; }
```
